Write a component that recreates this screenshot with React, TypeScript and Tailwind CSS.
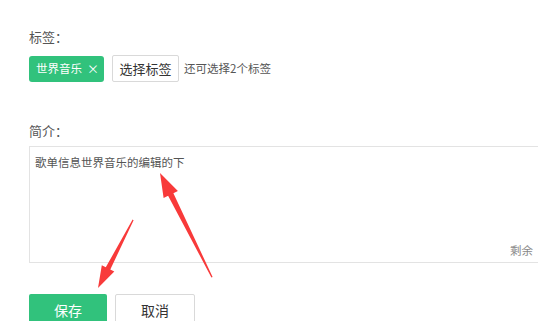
import React from "react";

const font = { fontFamily: '"Noto Sans CJK SC", "Noto Sans", sans-serif' };

function Arrows() {
  return (
    <svg
      className="pointer-events-none absolute left-0 top-0"
      width="538"
      height="321"
      viewBox="0 0 538 321"
    >
      <polygon
        fill="#f83a3a"
        points="160,173 177.9,190.9 173.4,193.2 212.6,277 211.4,277.4 168.1,195.8 163.6,198.1"
      />
      <polygon
        fill="#f83a3a"
        points="98,288 101.8,265.2 105.8,267.3 132.6,219.6 133.6,220.2 110.3,269.5 114.3,271.6"
      />
    </svg>
  );
}

export default function App() {
  return (
    <div
      className="relative h-[321px] w-[538px] overflow-hidden bg-white pl-[29px] pt-[28px]"
      style={font}
    >
      <div className="text-[13px] leading-[18px] text-[#555]">标签：</div>

      <div className="mt-[9px] flex items-center">
        <span className="flex h-[26px] w-[75px] items-center gap-[5px] rounded-[3px] bg-[#31c27c] pl-[7px] text-[11.5px] text-white">
          世界音乐
          <span className="text-[12px] leading-none">×</span>
        </span>
        <button className="ml-[8px] h-[27px] w-[67px] rounded-[2px] border border-[#d9d9d9] bg-white text-[13px] text-[#333]">
          选择标签
        </button>
        <span className="ml-[5px] text-[11.5px] text-[#555]">还可选择2个标签</span>
      </div>

      <div className="mt-[40px] text-[13px] leading-[18px] text-[#555]">简介：</div>

      <div className="relative mt-[6px] h-[117px] w-[530px] border border-[#e3e3e3] bg-white px-[5px] pt-[6px]">
        <div className="text-[11.5px] leading-[18px] text-[#555]">歌单信息世界音乐的编辑的下</div>
        <div className="absolute left-[480px] top-[95px] text-[11.5px] text-[#888]">剩余</div>
      </div>

      <div className="mt-[31px] flex gap-[8px]">
        <button className="h-[32px] w-[78px] rounded-[2px] bg-[#31c27c] text-[14px] text-white">
          保存
        </button>
        <button className="h-[32px] w-[80px] rounded-[2px] border border-[#d9d9d9] bg-white text-[14px] text-[#333]">
          取消
        </button>
      </div>

      <Arrows />
    </div>
  );
}
